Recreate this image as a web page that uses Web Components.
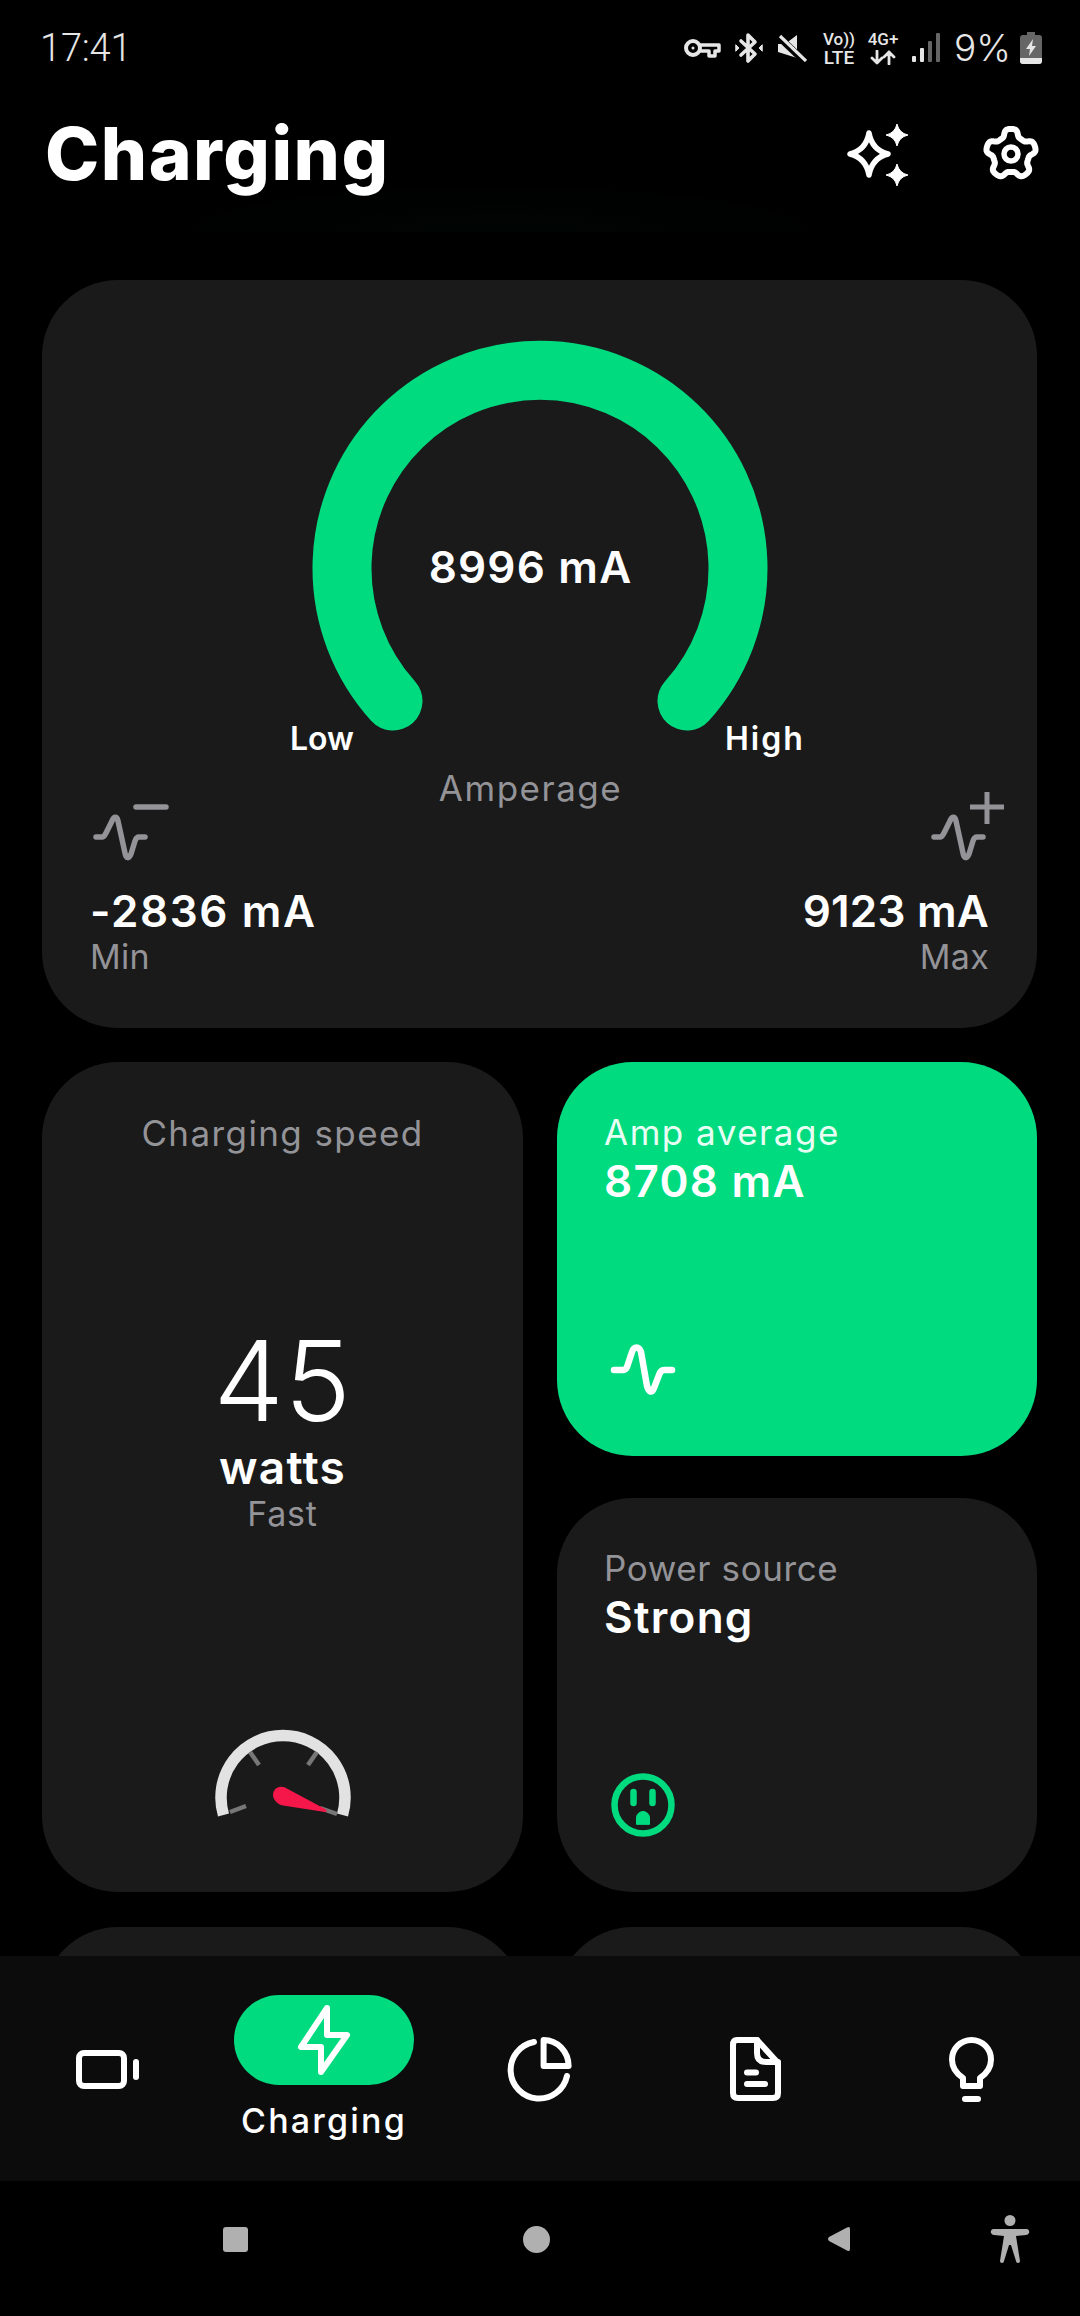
<!DOCTYPE html>
<html lang="en"><head><meta charset="utf-8"><title>Charging</title>
<style>
html,body{margin:0;background:#000;}
body{width:1080px;height:2316px;overflow:hidden;display:flex;flex-direction:column;font-family:Inter,"Liberation Sans",sans-serif;color:#fff;}
app-main{flex:1;min-height:0;}
</style></head><body>
<status-bar></status-bar>
<app-header title="Charging"></app-header>
<app-main>
  <gauge-card value="8996 mA" min="-2836 mA" max="9123 mA"></gauge-card>
  <card-grid>
    <speed-card style="grid-row:span 2"></speed-card>
    <stat-card label="Amp average" value="8708 mA" accent>
      <svg width="70" height="56" viewBox="0 0 70 56" fill="none" stroke="#fff" stroke-width="6.5" stroke-linecap="round" stroke-linejoin="round"><path d="M6 28H15C17 28 18 27 19 25L24 10C26 4 31 4 33 10L39 44C41 51 44 51 46 46L51 33C52 30 53 28 56 28H64"/></svg>
    </stat-card>
    <stat-card label="Power source" value="Strong" style="--ls:.6px">
      <svg width="70" height="66" viewBox="0 0 70 66" fill="none" stroke="#00DB80" stroke-width="6.5" stroke-linecap="round"><circle cx="35" cy="33" r="28.5"/><path d="M25.500 20V31M44.500 20V31"/><path d="M28.500 52V46A6.500 6.500 0 0 1 41.500 46V52Z" fill="#00DB80" stroke-width="1" stroke-linejoin="round"/></svg>
    </stat-card>
    <empty-card></empty-card>
    <empty-card></empty-card>
  </card-grid>
</app-main>
<bottom-nav></bottom-nav>
<system-nav></system-nav>
<script>
function el(name, css, html, init){
  customElements.define(name, class extends HTMLElement{
    constructor(){super();this.attachShadow({mode:'open'});}
    connectedCallback(){
      const a=n=>this.getAttribute(n)||'';
      this.shadowRoot.innerHTML='<style>'+css+'</style>'+(typeof html==='function'?html(a,this):html);
      if(init)init(this.shadowRoot);
    }
  });
}
el('status-bar',`
:host{display:flex;align-items:center;height:66px;margin-top:15px;margin-bottom:15px;padding:0 38px 0 40px;flex:none;font-family:Roboto,sans-serif;color:#e6e6e6;box-sizing:border-box}
.t{font-size:38px;font-weight:300;line-height:66px;letter-spacing:-.2px}
.r{margin-left:auto;display:flex;align-items:center;height:66px}
svg{display:block;flex:none}
.two{display:flex;flex-direction:column;align-items:center;line-height:15px;font-weight:500;color:#e6e6e6;white-space:nowrap}
.pc{font-family:Inter,sans-serif;font-size:37px;font-weight:300;line-height:66px;margin-left:14px;width:64px}
`,`<span class="t">17:41</span><div class="r">
<svg width="38" height="22" viewBox="0 0 38 22" fill="none" stroke="#e6e6e6" stroke-width="4"><circle cx="10" cy="11" r="7"/><circle cx="10" cy="11" r="1.500" fill="#e6e6e6" stroke="none"/><path d="M17 8H36V14H32V19H26V14H17" stroke-width="3.500" stroke-linejoin="round"/></svg>
<svg style="margin-left:14px" width="28" height="32" viewBox="0 0 28 32" fill="none" stroke="#e6e6e6" stroke-width="3.600" stroke-linejoin="round" stroke-linecap="round"><path d="M6 9L20 22L13 29V3L20 10L6 23"/><path d="M1 13L4 16L1 19Z M27 13L24 16L27 19Z" fill="#e6e6e6" stroke-width="1"/></svg>
<svg style="margin-left:14px" width="30" height="28" viewBox="0 0 30 28" fill="none"><path d="M1 10H8L20 1V24L1 18Z" fill="#e6e6e6"/><path d="M1 2L27 27" stroke="#000" stroke-width="7"/><path d="M3 2L29 27" stroke="#e6e6e6" stroke-width="3.200"/></svg>
<div class="two" style="margin-left:16px;width:32px"><span style="font-size:17px">Vo))</span><span style="font-size:19px;margin-top:3px">LTE</span></div>
<div class="two" style="margin-left:11px;width:34px"><span style="font-size:17px">4G+</span><svg style="margin-top:3px" width="26" height="15" viewBox="0 0 26 15" fill="none" stroke="#e6e6e6" stroke-width="2.800" stroke-linecap="round" stroke-linejoin="round"><path d="M7 1V13M2 8L7 13L12 8M19 14V2M14 7L19 2L24 7"/></svg></div>
<svg style="margin-left:12px" width="28" height="30" viewBox="0 0 28 30"><rect x="0" y="23" width="4" height="6" rx="1" fill="#e6e6e6"/><rect x="8" y="15" width="4" height="14" rx="1" fill="#e6e6e6"/><rect x="16" y="8" width="4" height="21" rx="1" fill="#666"/><rect x="24" y="0" width="4" height="29" rx="1" fill="#666"/></svg>
<span class="pc">9%</span>
<svg style="margin-left:2px" width="22" height="32" viewBox="0 0 22 32"><path d="M7 0H15V3H19Q22 3 22 6V29Q22 32 19 32H3Q0 32 0 29V6Q0 3 3 3H7Z" fill="#666"/><path d="M0 26H22V29Q22 32 19 32H3Q0 32 0 29Z" fill="#e6e6e6"/><path d="M13 7L6 17H10L9 24L16 14H12Z" fill="#e6e6e6"/></svg>
</div>`);

el('app-header',`
:host{display:flex;align-items:flex-start;height:136px;flex:none;padding:0 40px 0 45px;box-sizing:border-box;position:relative;background:radial-gradient(ellipse 340px 50px at 500px 100%,rgba(0,220,130,.022),transparent)}
h1{margin:0;font-size:73px;font-weight:800;line-height:78px;margin-top:19px;letter-spacing:1.5px}
.i{margin-left:auto;display:flex;gap:0;margin-top:27px}
svg{display:block;flex:none}
`,a=>`<h1>${a('title')}</h1><div class="i">
<svg width="62" height="64" viewBox="0 0 62 64" fill="none" stroke="#fff"><path d="M22 10Q25 27 41 31Q25 35 22 52Q19 35 3 31Q19 27 22 10Z" stroke-width="5.500" stroke-linejoin="round"/><path d="M50 1Q52 10 61 12Q52 14 50 23Q48 14 39 12Q48 10 50 1Z" fill="#fff" stroke-width="1"/><path d="M50 41Q52 50 61 52Q52 54 50 63Q48 54 39 52Q48 50 50 41Z" fill="#fff" stroke-width="1"/></svg>
<svg id="g" style="margin-left:73px;margin-top:2px" width="58" height="58" viewBox="-29 -29 58 58" fill="none" stroke="#fff" stroke-width="6" stroke-linejoin="round"><path id="gp"/><circle r="7" stroke-width="5.500"/></svg>
</div>`,s=>{let d='';for(let i=0;i<=240;i++){const t=i/240*2*Math.PI-Math.PI/2;const f=Math.tanh(2*Math.cos(5*(t+Math.PI/2)))/Math.tanh(2);const r=21.5+3.6*f;d+=(i?'L':'M')+(r*Math.cos(t)).toFixed(2)+' '+(r*Math.sin(t)).toFixed(2);}s.getElementById('gp').setAttribute('d',d+'Z');});

el('app-main',`
:host{display:flex;flex-direction:column;gap:34px;padding:48px 43px 0 42px;overflow:hidden;box-sizing:border-box}
`,`<slot></slot>`);

el('gauge-card',`
:host{display:block;flex:none;height:748px;background:#1a1a1a;border-radius:76px;padding-top:61px;box-sizing:border-box}
.w{position:relative;height:425px;display:flex;justify-content:center}
svg{display:block;overflow:visible}
.v{position:absolute;left:0;right:18px;top:196px;text-align:center;font-size:44px;font-weight:600;line-height:60px;letter-spacing:1.2px}
.lo,.hi{position:absolute;top:376px;font-size:32px;font-weight:600;line-height:44px}
.lo{left:248px}.hi{left:683px;letter-spacing:2px}
.g{display:grid;grid-template-columns:1fr auto 1fr;padding:0 48px 0 48px}
.a{font-size:35px;line-height:44px;color:#939398;padding-right:18px;letter-spacing:1.5px}
.c{display:flex;flex-direction:column}
.c.m{align-items:flex-end}
.c svg{margin-top:31px}
.n{font-size:44px;font-weight:600;line-height:48px;margin-top:18px;letter-spacing:.2px;white-space:nowrap}
.c:first-child .n{letter-spacing:1.6px}
.l{font-size:34px;line-height:44px;color:#939398;letter-spacing:.3px}
`,a=>`<div class="w">
<svg width="456" height="420" viewBox="0 0 456 420" fill="none"><path d="M81 360A198 198 0 1 1 375 360" stroke="#00DB80" stroke-width="59" stroke-linecap="round"/></svg>
<span class="v">${a('value')}</span><span class="lo">Low</span><span class="hi">High</span></div>
<div class="g">
<div class="c"><svg width="82" height="72" viewBox="0 0 82 72" fill="none" stroke="#939398" stroke-width="5.500" stroke-linecap="round" stroke-linejoin="round"><path d="M46 10H76" stroke-width="5.500"/><path d="M6 40H12C14 40 15 38 16 36L22 24C24 19 27 19 28 24L35 56C36 62 39 62 41 57L45 44C46 41 47 40 49 40H55"/></svg><span class="n">${a('min')}</span><span class="l">Min</span></div>
<div class="a">Amperage</div>
<div class="c m"><svg style="margin-right:-16px" width="80" height="72" viewBox="0 0 80 72" fill="none" stroke="#939398" stroke-width="5.500" stroke-linecap="round" stroke-linejoin="round"><path d="M45 10H79M62 -5V27" stroke-width="5" stroke-linecap="butt"/><path d="M9 40H15C17 40 18 38 19 36L25 24C27 19 30 19 31 24L38 56C39 62 42 62 44 57L48 44C49 41 50 40 52 40H58"/></svg><span class="n">${a('max')}</span><span class="l">Max</span></div>
</div>`);

el('card-grid',`
:host{display:grid;grid-template-columns:481px 480px;grid-template-rows:394px 394px 200px;column-gap:34px;row-gap:42px;flex:none}
::slotted(empty-card){margin-top:-7px}
`,`<slot></slot>`);

el('empty-card',`:host{display:block;background:#1a1a1a;border-radius:76px}`,``);

el('speed-card',`
:host{display:flex;flex-direction:column;align-items:center;background:#1a1a1a;border-radius:76px;padding-top:49px;box-sizing:border-box}
.t{font-size:35px;line-height:44px;color:#939398;letter-spacing:1.4px}
.b{font-size:112px;font-weight:300;line-height:110px;margin-top:170px;letter-spacing:.5px}
.w{font-size:46px;font-weight:600;line-height:50px;margin-top:7px;letter-spacing:1.2px}
.f{font-size:34px;line-height:44px;color:#939398;margin-top:0;letter-spacing:.8px}
svg{display:block;margin-top:192px}
`,`<span class="t">Charging speed</span><span class="b">45</span><span class="w">watts</span><span class="f">Fast</span>
<svg width="136" height="95" viewBox="0 0 136 95" fill="none"><path d="M8.500 87A62 62 0 1 1 127.500 87" stroke="#e2e2e2" stroke-width="11.500"/>
<path d="M15 84L31 78M35 24L44 37M102 24L93 37M105 80L122 86" stroke="#777" stroke-width="4.500"/>
<path d="M70 59.500L111 81.500Q113 84 110 84L68 77.500C60 76 56 68 59 63C61 59 66 58 70 59.500Z" fill="#F5174A"/></svg>`);

el('stat-card',`
:host{display:flex;flex-direction:column;align-items:flex-start;background:#1a1a1a;border-radius:76px;padding:48px 47px 54px;box-sizing:border-box}
:host([accent]){background:#00DB80;padding-bottom:58px}
.l{font-size:35px;line-height:44px;color:#939398;letter-spacing:var(--ls,1.500px)}
:host([accent]) .l{color:#e8fff4}
.v{font-size:44px;font-weight:600;line-height:50px;margin-top:2px;letter-spacing:1.300px}
.i{margin-top:auto}
::slotted(svg){display:block;margin-left:4px}
`,a=>`<span class="l">${a('label')}</span><span class="v">${a('value')}</span><div class="i"><slot></slot></div>`);

el('bottom-nav',`
:host{display:grid;grid-template-columns:repeat(5,216px);height:225px;background:#0c0c0c;flex:none;align-items:center;justify-items:center;position:relative;z-index:1}
svg{display:block}
.s{display:flex;flex-direction:column;align-items:center}
.p{width:180px;height:90px;border-radius:45px;background:#00DB80;display:flex;align-items:center;justify-content:center}
.lb{font-size:34px;font-weight:500;line-height:44px;margin-top:14px;letter-spacing:2.2px}
`,`
<svg width="68" height="44" viewBox="0 0 68 44" fill="none" stroke="#fff" stroke-width="6" stroke-linecap="round" stroke-linejoin="round"><rect x="5" y="6" width="45" height="33" rx="5"/><path d="M62 15V30"/></svg>
<div class="s"><div class="p"><svg width="56" height="72" viewBox="0 0 56 72" fill="none" stroke="#fff" stroke-width="6" stroke-linejoin="round"><path d="M31 4L5 43H25V68L51 31H31Z"/></svg></div><span class="lb">Charging</span></div>
<svg width="68" height="68" viewBox="0 0 68 68" fill="none" stroke="#fff" stroke-width="6" stroke-linejoin="round" stroke-linecap="round"><path d="M37.600 5A25 26 0 0 1 62.600 31H37.600Z"/><path d="M28 7A28.500 28.500 0 1 0 61 41"/></svg>
<svg width="56" height="68" viewBox="0 0 56 68" fill="none" stroke="#fff" stroke-width="6" stroke-linejoin="round" stroke-linecap="round"><path d="M9 5H29L50 28V58Q50 63 45 63H10Q5 63 5 58V10Q5 5 9 5Z"/><path d="M29 5V18Q29 27 38 27H50"/><path d="M19 37.500H28M19 49H37"/></svg>
<svg width="52" height="68" viewBox="0 0 52 68" fill="none" stroke="#fff" stroke-width="6" stroke-linejoin="round" stroke-linecap="round"><path d="M17 51H34V43C40 39 45 33 45 24.500A19.500 19.500 0 1 0 6 24.500C6 33 11 39 17 43Z"/><path d="M19 64H32"/></svg>`);

el('system-nav',`
:host{display:flex;align-items:center;flex:none;height:135px;padding:0 0 19px 223px;box-sizing:border-box;background:#000}
svg{display:block;flex:none}
`,`
<svg width="25" height="25" viewBox="0 0 25 25"><rect width="25" height="25" rx="3" fill="#b0b0b0"/></svg>
<svg style="margin-left:275px" width="27" height="27" viewBox="0 0 27 27"><circle cx="13.500" cy="13.500" r="13.500" fill="#b0b0b0"/></svg>
<svg style="margin-left:277px" width="23" height="26" viewBox="0 0 23 26"><path d="M23 3V23Q23 26 20 24.500L2 15Q0 13 2 11L20 1.500Q23 0 23 3Z" fill="#b0b0b0"/></svg>
<svg style="margin-left:140px" width="40" height="48" viewBox="0 0 40 48" fill="#b0b0b0"><circle cx="20" cy="5.500" r="5.500"/><path d="M3 14H37Q40 15 39 18Q38 20 36 20L26 21L30 46Q30 48 28 48Q26 48 26 46L21 30H19L14 46Q14 48 12 48Q10 48 10 46L14 21L4 20Q2 20 1 18Q0 15 3 14Z"/></svg>`);
</script>
</body></html>
